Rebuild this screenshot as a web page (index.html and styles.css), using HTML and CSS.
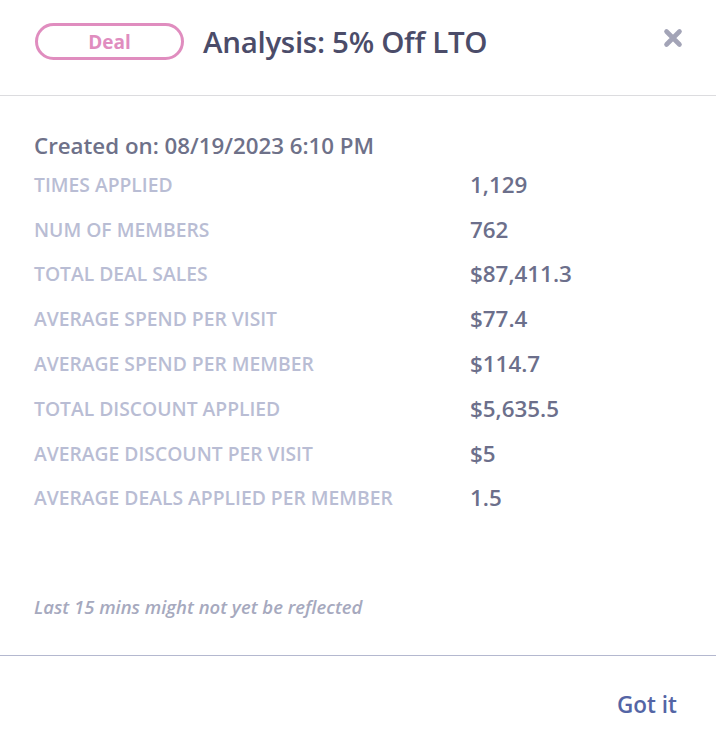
FILE: index.html
```html
<!DOCTYPE html>
<html>
<head>
<meta charset="utf-8">
<link rel="stylesheet" href="styles.css">
</head>
<body>
<div class="modal">
  <header class="head">
    <span class="badge">Deal</span>
    <h1 class="title">Analysis: 5% Off LTO</h1>
    <button class="close" aria-label="Close">
      <svg width="20" height="20" viewBox="0 0 20 20"><path d="M3.5 3.5 L16.5 16.5 M16.5 3.5 L3.5 16.5" stroke="#a3a4b7" stroke-width="4.6" stroke-linecap="round"/></svg>
    </button>
  </header>
  <section class="body">
    <div class="created">Created on: 08/19/2023 6:10 PM</div>
    <div class="stats">
      <div class="label">TIMES APPLIED</div><div class="value">1,129</div>
      <div class="label">NUM OF MEMBERS</div><div class="value">762</div>
      <div class="label">TOTAL DEAL SALES</div><div class="value">$87,411.3</div>
      <div class="label">AVERAGE SPEND PER VISIT</div><div class="value">$77.4</div>
      <div class="label">AVERAGE SPEND PER MEMBER</div><div class="value">$114.7</div>
      <div class="label">TOTAL DISCOUNT APPLIED</div><div class="value">$5,635.5</div>
      <div class="label">AVERAGE DISCOUNT PER VISIT</div><div class="value">$5</div>
      <div class="label">AVERAGE DEALS APPLIED PER MEMBER</div><div class="value">1.5</div>
    </div>
    <p class="note">Last 15 mins might not yet be reflected</p>
  </section>
  <footer class="foot">
    <button class="got">Got it</button>
  </footer>
</div>
</body>
</html>
```
FILE: styles.css
```css
* { box-sizing: border-box; }
html, body { margin: 0; padding: 0; }
body {
  width: 716px;
  height: 752px;
  background: #fff;
  font-family: "Open Sans", "Liberation Sans", sans-serif;
  overflow: hidden;
}
.modal {
  width: 716px;
  height: 752px;
  display: flex;
  flex-direction: column;
}
.head {
  height: 96px;
  border-bottom: 1px solid #dcdcdf;
  display: flex;
  align-items: center;
  padding: 0 33px 12px 35px;
}
.badge {
  width: 149px;
  height: 37px;
  border: 3px solid #e08dbf;
  border-radius: 19px;
  color: #e08dbf;
  font-weight: 700;
  font-size: 19px;
  display: flex;
  align-items: center;
  justify-content: center;
}
.title {
  margin: 0 0 0 19px;
  font-size: 29.5px;
  font-weight: 600;
  color: #4b4c69;
  letter-spacing: -0.3px;
  flex: 1;
}
.close {
  border: 0;
  background: none;
  padding: 0;
  width: 20px;
  height: 20px;
  margin-bottom: 8px;
}
.close svg { display: block; }
.body {
  padding: 36px 34px 0 34px;
  height: 560px;
  border-bottom: 1px solid #b4b8cf;
}
.created {
  font-size: 22.3px;
  font-weight: 600;
  color: #6e7189;
  line-height: 28px;
}
.stats {
  display: grid;
  grid-template-columns: 436px auto;
  grid-auto-rows: 44.8px;
  align-items: center;
  margin-top: 2px;
}
.label {
  font-size: 19.3px;
  font-weight: 600;
  color: #b9bdd4;
}
.value {
  font-size: 22.4px;
  font-weight: 600;
  color: #6c6f8b;
}
.note {
  margin: 74px 0 0 0;
  font-size: 18.5px;
  font-style: italic;
  font-weight: 600;
  color: #a6a9be;
}
.foot {
  flex: 1;
  display: flex;
  justify-content: flex-end;
  align-items: center;
  padding-right: 39px;
}
.got {
  border: 0;
  background: none;
  padding: 0;
  font-family: inherit;
  font-size: 22.5px;
  font-weight: 600;
  color: #5465a5;
}
```
